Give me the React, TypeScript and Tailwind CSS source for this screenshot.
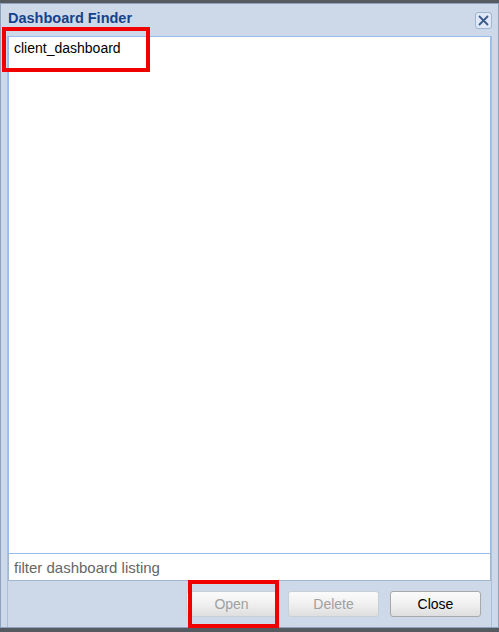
const buttons = [
  { label: 'Open', disabled: true },
  { label: 'Delete', disabled: true },
  { label: 'Close', disabled: false },
];

export default function App() {
  return (
    <div
      className="relative w-[499px] h-[632px] bg-[#555a60] pt-[3px] pb-[4px] flex flex-col"
      style={{ fontFamily: '"Liberation Sans", Arial, sans-serif' }}
    >
      {/* Window */}
      <div className="flex-1 flex flex-col bg-[#cdd9e8] border border-[#8ea2bd]">
        {/* Header */}
        <div className="h-[32px] flex items-center justify-between pl-[7px] pr-[6px]">
          <span className="text-[14.5px] font-bold text-[#15428b] leading-none -mt-[3px]">Dashboard Finder</span>
          <button className="w-[17px] h-[17px] rounded-[3px] border border-[#9fb6d3] bg-[#dfe8f4] flex items-center justify-center">
            <svg width="11" height="11" viewBox="0 0 11 11">
              <path d="M1.5 1.5 L9.5 9.5 M9.5 1.5 L1.5 9.5" stroke="#3b5a8c" strokeWidth="1.8" strokeLinecap="round" />
            </svg>
          </button>
        </div>

        {/* Body */}
        <div className="flex-1 flex flex-col ml-[6px] mr-[6px] border-l border-r border-[#a9bfdc]">
          <div className="flex-1 bg-white border border-[#99bbe8] px-[5px] pt-[2px]">
            <div className="text-[14px] text-black leading-[18px]">client_dashboard</div>
          </div>
          <div className="h-[27px] bg-white border border-t-0 border-[#a3b6cf] flex items-center px-[5px]">
            <span className="text-[15px] text-[#666] leading-none mt-[1px]">filter dashboard listing</span>
          </div>
          <div className="h-[46px] flex items-center justify-end gap-[11px] pr-[10px]">
            {buttons.map((b) => (
              <button
                key={b.label}
                className={`w-[91px] h-[26px] rounded-[3px] border text-[14px] leading-none bg-gradient-to-b from-[#fbfbfb] via-[#f0f0f0] to-[#dedede] ${
                  b.disabled ? 'border-[#c9cfd6] text-[#a0a0a0]' : 'border-[#a8a8a8] text-black'
                }`}
              >
                {b.label}
              </button>
            ))}
          </div>
        </div>
      </div>

      {/* Annotation overlays */}
      <div className="absolute left-[2px] top-[27px] w-[148px] h-[45px] border-[4px] border-[#f00000]" />
      <div className="absolute left-[188px] top-[580px] w-[91px] h-[48px] border-[4px] border-[#f00000]" />
    </div>
  );
}
